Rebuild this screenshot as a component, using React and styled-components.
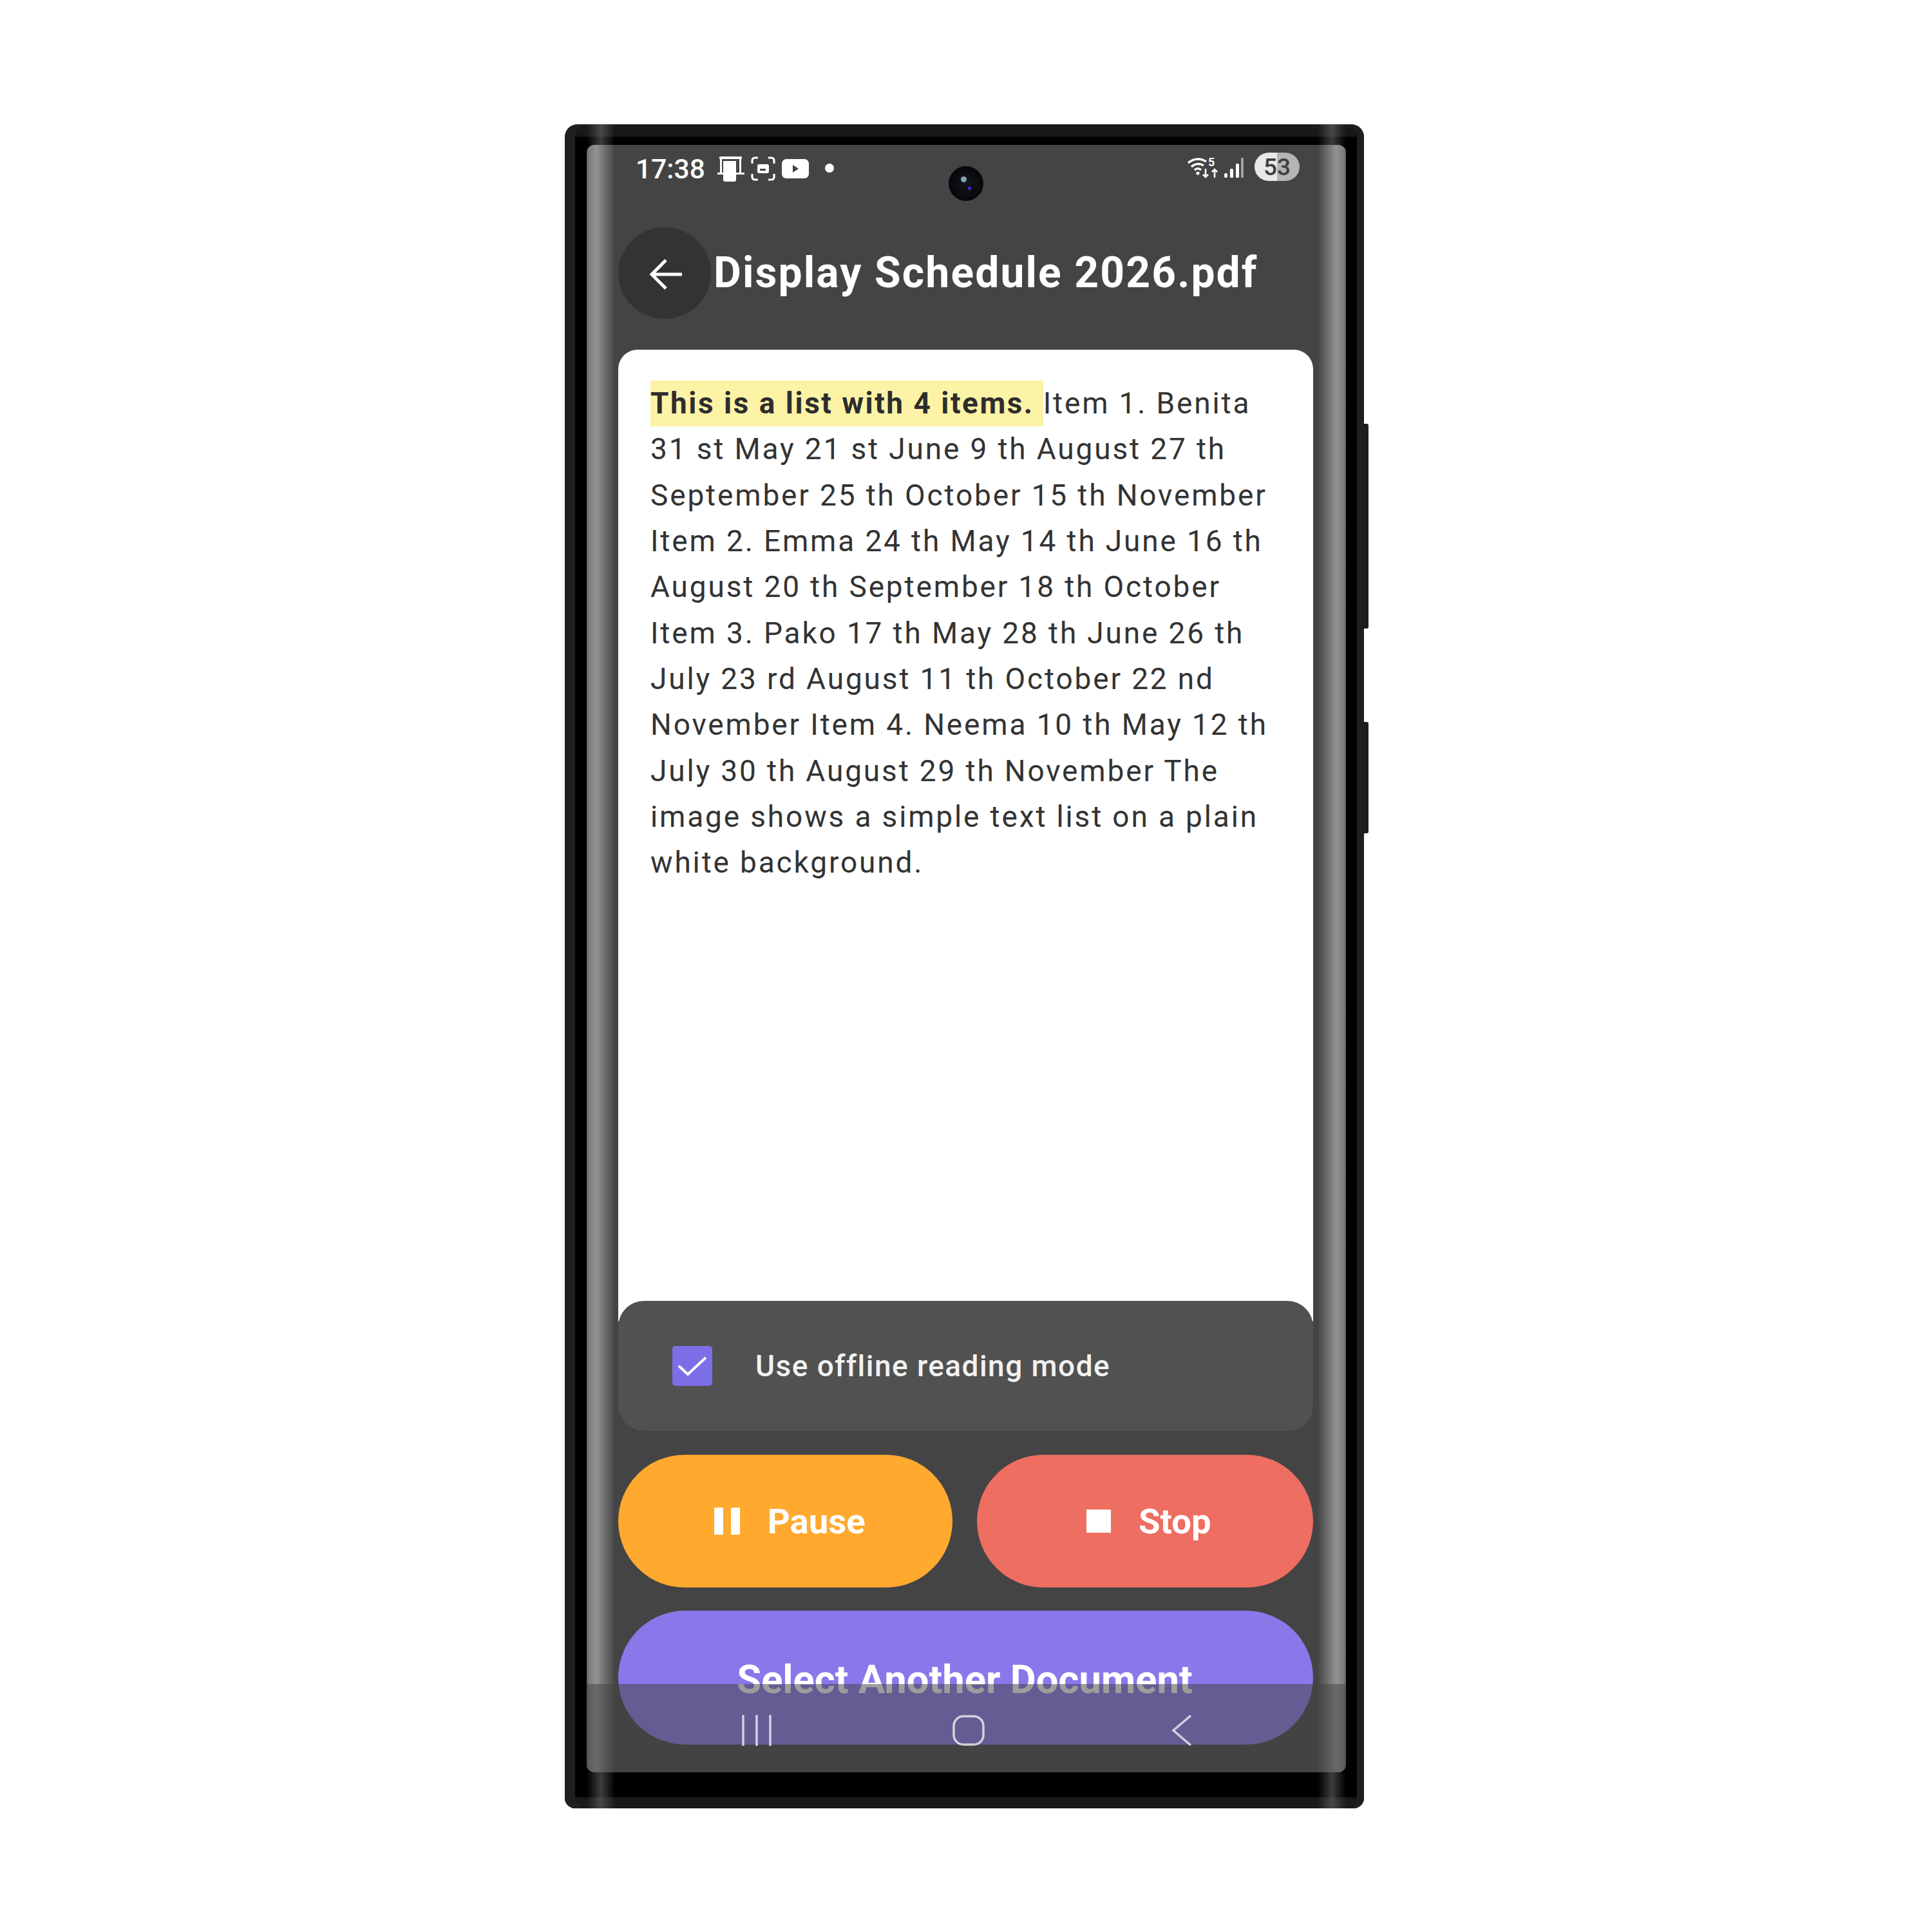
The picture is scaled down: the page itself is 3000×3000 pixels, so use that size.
import React from "react";
import styled, { createGlobalStyle } from "styled-components";

const GlobalStyle = createGlobalStyle`
  html, body {
    margin: 0;
    padding: 0;
    background: #fff;
  }
  * {
    box-sizing: border-box;
  }
`;

const Page = styled.div`
  width: 3000px;
  height: 3000px;
  padding: 193px 0 0 877px;
  background: #fff;
  font-family: Roboto, "Liberation Sans", sans-serif;
`;

const Phone = styled.div`
  position: relative;
  width: 1241px;
  height: 2615px;
  padding: 32px 28px 56px 34px;
  border-radius: 20px 20px 16px 16px;
  background: linear-gradient(
    #1b1b1b 0,
    #161616 19px,
    #000 20px,
    #000 calc(100% - 18px),
    #1a1a1a calc(100% - 16px)
  );
  box-shadow: inset 16px 0 0 #202020, inset -11px 0 0 #1e1e1e;
`;

const SideKey = styled.div`
  position: absolute;
  right: -7px;
  top: ${(p) => p.$top}px;
  width: 8px;
  height: ${(p) => p.$height}px;
  border-radius: 0 3px 3px 0;
  background: #1c1c1c;
`;

const FrameGloss = styled.div`
  position: absolute;
  width: 44px;
  ${(p) => (p.$right ? "right: 28px;" : "left: 34px;")}
  ${(p) => (p.$bottom ? "bottom: 0; height: 56px;" : "top: 0; height: 32px;")}
  background: linear-gradient(
    90deg,
    rgba(110, 110, 110, 0),
    rgba(110, 110, 110, 0.55) 50%,
    rgba(110, 110, 110, 0)
  );
`;

const Screen = styled.div`
  position: relative;
  display: flex;
  flex-direction: column;
  height: 100%;
  padding: 0 51px 43px 49px;
  overflow: hidden;
  border-radius: 12px;
  background: #444;
`;

const EdgeLight = styled.div`
  position: absolute;
  top: 0;
  bottom: 0;
  width: 44px;
  ${(p) => (p.$right ? "right: 0;" : "left: 0;")}
  background: ${(p) =>
    p.$right
      ? "linear-gradient(90deg, rgba(146,146,146,0), #929292 65%, #7f7f7f 90%, #666 100%)"
      : "linear-gradient(270deg, rgba(146,146,146,0), #929292 65%, #7f7f7f 90%, #666 100%)"};
`;

const StatusBar = styled.div`
  position: relative;
  display: flex;
  align-items: center;
  height: 128px;
  flex: none;
  margin: 0 21px 0 27px;
  padding-bottom: 54px;
  color: #fff;
`;

const Time = styled.span`
  font-size: 42.5px;
  font-weight: 500;
  margin-right: 19px;
`;

const StatusIcon = styled.svg`
  display: block;
  flex: none;
  margin-right: ${(p) => p.$gap ?? 10}px;
  margin-bottom: ${(p) => p.$lift || 0}px;
`;

const Spacer = styled.div`
  flex: 1;
`;

const Battery = styled.div`
  width: 70px;
  height: 44px;
  margin: 0 0 6px 17px;
  border-radius: 22px;
  background: linear-gradient(90deg, #e8e8e8 50%, #b4b4b4 50%);
  color: #3f3f3f;
  font-size: 37px;
  font-weight: 500;
  line-height: 45px;
  text-align: center;
`;

const Camera = styled.div`
  position: absolute;
  left: 562px;
  top: 33px;
  width: 54px;
  height: 54px;
  border-radius: 50%;
  background: radial-gradient(circle at 50% 50%, #15151c 0, #0c0c12 45%, #000 100%);
`;

const LensDot = styled.div`
  position: absolute;
  left: ${(p) => p.$x}px;
  top: ${(p) => p.$y}px;
  width: ${(p) => p.$size}px;
  height: ${(p) => p.$size}px;
  border-radius: 50%;
  background: ${(p) => p.$color};
`;

const Header = styled.div`
  display: flex;
  align-items: center;
  height: 142px;
  flex: none;
  margin-bottom: 48px;
`;

const BackButton = styled.div`
  display: flex;
  align-items: center;
  justify-content: center;
  width: 144px;
  height: 142px;
  margin-right: 4px;
  padding: 4px 0 0 6px;
  border-radius: 50%;
  background: #333;
`;

const Title = styled.h1`
  margin: -2px 0 0;
  color: #fff;
  font-size: 66px;
  font-weight: 700;
  letter-spacing: 2.1px;
  white-space: nowrap;
`;

const Card = styled.div`
  flex: 1;
  min-height: 0;
  padding: 48px 40px 0 50px;
  border-radius: 30px 30px 0 0;
  background: #fff;
  color: #333;
  font-size: 46px;
  line-height: 71.35px;
  letter-spacing: 2.85px;
`;

const Spoken = styled.mark`
  padding: 8px 0 9px;
  background: #fdf3a7;
  color: #2d2d2d;
  font-weight: 700;
  letter-spacing: 2.5px;
`;

const OptionPanel = styled.div`
  position: relative;
  display: flex;
  align-items: center;
  flex: none;
  height: 202px;
  margin-top: -32px;
  padding-left: 84px;
  border-radius: 40px;
  background: #515151;
`;

const CheckBox = styled.div`
  display: flex;
  align-items: center;
  justify-content: center;
  flex: none;
  width: 62px;
  height: 62px;
  margin-right: 67px;
  border-radius: 5px;
  background: #7c6ee6;
`;

const OptionLabel = styled.span`
  color: #f2f2f2;
  font-size: 46px;
  font-weight: 500;
  letter-spacing: 1.45px;
`;

const ButtonRow = styled.div`
  display: grid;
  grid-template-columns: 519fr 523fr;
  flex: none;
  gap: 38px;
  margin-top: 37px;
`;

const ActionButton = styled.div`
  display: flex;
  align-items: center;
  justify-content: center;
  gap: 43px;
  height: 206px;
  padding-left: ${(p) => p.$shift}px;
  border-radius: 103px;
  background: ${(p) => p.$color};
  color: #fff;
  font-size: 54.5px;
  font-weight: 700;
`;

const WideButton = styled.div`
  flex: none;
  height: 208px;
  margin-top: 36px;
  padding: 51px 3px 0 0;
  border-radius: 104px;
  background: #8878ea;
  color: #fff;
  font-size: 61.5px;
  font-weight: 700;
  line-height: 112px;
  text-align: center;
`;

const NavBar = styled.div`
  position: absolute;
  left: 0;
  right: 0;
  bottom: 0;
  height: 137px;
  background: rgba(68, 68, 68, 0.52);
`;

const NavIcon = styled.svg`
  position: absolute;
  top: 48px;
  left: ${(p) => p.$left}px;
  height: 48px;
  fill: none;
  stroke: rgba(255, 255, 255, 0.72);
  stroke-width: 3.5;
`;

export default function App() {
  return (
    <Page>
      <GlobalStyle />
      <Phone>
        <SideKey $top={465} $height={318} />
        <SideKey $top={928} $height={173} />
        <FrameGloss />
        <FrameGloss $right />
        <FrameGloss $bottom />
        <FrameGloss $bottom $right />
        <Screen>
          <EdgeLight />
          <EdgeLight $right />
          <StatusBar>
            <Time>17:38</Time>
            <StatusIcon width="42" height="40" viewBox="0 0 42 40" fill="#fff">
              <rect x="3" y="1" width="35" height="4" rx="1" />
              <rect x="4" y="4" width="3" height="22" />
              <rect x="34" y="4" width="3" height="22" />
              <path d="M9 8h20v29a3 3 0 0 1-3 3H12a3 3 0 0 1-3-3z" />
              <rect x="0" y="26" width="9" height="3" />
              <rect x="29" y="26" width="13" height="3" />
            </StatusIcon>
            <StatusIcon width="38" height="38" viewBox="0 0 38 38" fill="none" stroke="#fff" strokeWidth="3.2">
              <path d="M2 11V6a4 4 0 0 1 4-4h5M27 2h5a4 4 0 0 1 4 4v5M36 27v5a4 4 0 0 1-4 4h-5M11 36H6a4 4 0 0 1-4-4v-5" />
              <rect x="10" y="12" width="18" height="14" rx="3" fill="#fff" stroke="none" />
              <path d="M14 20.5h9" stroke="#444" strokeWidth="3" />
            </StatusIcon>
            <StatusIcon width="42" height="30" viewBox="0 0 42 30" $gap={25}>
              <rect width="42" height="30" rx="7" fill="#fff" />
              <path d="M17 9l9 6-9 6z" fill="#444" />
            </StatusIcon>
            <StatusIcon width="14" height="14" viewBox="0 0 14 14" $gap={0} $lift={2}>
              <circle cx="7" cy="7" r="7" fill="#fff" />
            </StatusIcon>
            <Spacer />
            <StatusIcon width="47" height="37" viewBox="0 -4 47 37" fill="none" stroke="#fff" strokeWidth="3.4" $gap={10} $lift={8}>
              <path d="M1 9c8-7 19-8 28-2" />
              <path d="M6 15c5-5 13-6 19-2" />
              <path d="M11 20c3-3 7-3 10 0" />
              <circle cx="16" cy="25" r="2.6" fill="#fff" stroke="none" />
              <text x="32" y="14" fontSize="18" fontWeight="700" fontFamily="Roboto" fill="#fff" stroke="none">5</text>
              <path d="M28 18v13M24 27l4 4 4-4M42 32V19M38 23l4-4 4 4" strokeWidth="2.6" />
            </StatusIcon>
            <StatusIcon width="30" height="31" viewBox="0 0 30 31" fill="#fff" $gap={0} $lift={4}>
              <rect x="0" y="24" width="5" height="7" rx="2" />
              <rect x="9" y="17" width="5" height="14" rx="1.5" />
              <rect x="18" y="9" width="5" height="22" rx="1.5" />
              <rect x="26" y="0" width="4" height="31" rx="1" opacity="0.5" />
            </StatusIcon>
            <Battery>53</Battery>
          </StatusBar>
          <Camera>
            <LensDot $x={19} $y={16} $size={9} $color="#7fa7bb" />
            <LensDot $x={30} $y={32} $size={5} $color="#4a2ad8" />
          </Camera>
          <Header>
            <BackButton>
              <svg width="52" height="50" viewBox="0 0 52 50" fill="none" stroke="#fff" strokeWidth="5">
                <path d="M50 25H4M25 3L3 25l22 22" />
              </svg>
            </BackButton>
            <Title>Display Schedule 2026.pdf</Title>
          </Header>
          <Card>
            <Spoken>{"This is a list with 4 items. "}</Spoken>Item 1. Benita 31 st May 21 st June 9 th August 27 th September 25 th October 15 th November Item 2. Emma 24 th May 14 th June 16 th August 20 th September 18 th October Item 3. Pako 17 th May 28 th June 26 th July 23 rd August 11 th October 22 nd November Item 4. Neema 10 th May 12 th July 30 th August 29 th November The image shows a simple text list on a plain white background.
          </Card>
          <OptionPanel>
            <CheckBox>
              <svg width="46" height="32" viewBox="0 0 46 32" fill="none" stroke="#fff" strokeWidth="4">
                <path d="M2 16l14 13L44 3" />
              </svg>
            </CheckBox>
            <OptionLabel>Use offline reading mode</OptionLabel>
          </OptionPanel>
          <ButtonRow>
            <ActionButton $color="#ffa92f" $shift={14}>
              <svg width="40" height="42" viewBox="0 0 40 42" fill="#fff">
                <rect x="0" y="0" width="14" height="42" />
                <rect x="26" y="0" width="14" height="42" />
              </svg>
              Pause
            </ActionButton>
            <ActionButton $color="#ee6e62" $shift={12}>
              <svg width="38" height="36" viewBox="0 0 38 36" fill="#fff">
                <rect width="38" height="36" />
              </svg>
              Stop
            </ActionButton>
          </ButtonRow>
          <WideButton>Select Another Document</WideButton>
          <NavBar>
            <NavIcon $left={241} width="46" viewBox="0 0 46 48">
              <path d="M2 0v48M23 0v48M44 0v48" />
            </NavIcon>
            <NavIcon $left={568} width="50" viewBox="0 0 50 48">
              <rect x="2" y="2" width="46" height="44" rx="15" />
            </NavIcon>
            <NavIcon $left={908} width="32" viewBox="0 0 32 48">
              <path d="M30 1L3 24l27 23" />
            </NavIcon>
          </NavBar>
        </Screen>
      </Phone>
    </Page>
  );
}
